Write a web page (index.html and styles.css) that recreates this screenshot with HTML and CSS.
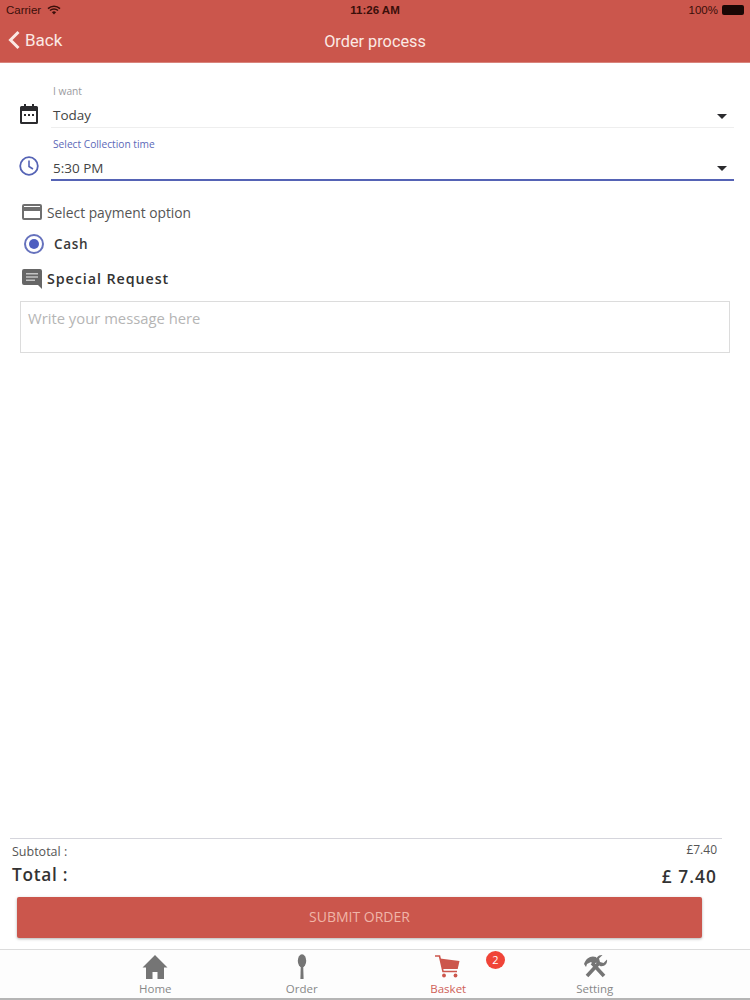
FILE: index.html
```html
<!DOCTYPE html>
<html lang="en">
  <head>
    <meta charset="UTF-8" />
    <meta name="viewport" content="width=device-width, initial-scale=1.0" />
    <title>Order process</title>
    <link rel="stylesheet" href="styles.css">
  </head>
  <body>
    <div class="page">
      <header class="top">
        <div class="status">
          <div class="status-left">
            <span>Carrier</span>
            <svg class="wifi" width="14" height="10" viewBox="0 0 14 10">
              <path d="M7 9.600 4.900 7.200a3 3 0 0 1 4.200 0z" fill="#3a0f0a"/>
              <path d="M1 3.600a8.600 8.600 0 0 1 12 0M3 5.600a5.600 5.600 0 0 1 8 0" fill="none" stroke="#3a0f0a" stroke-width="1.500"/>
            </svg>
          </div>
          <div class="status-time">11:26 AM</div>
          <div class="status-right">
            <span>100%</span>
            <div class="battery"></div>
          </div>
        </div>
        <div class="nav">
          <div class="back">
            <svg width="14" height="20" viewBox="0 0 14 20">
              <path d="M11.500 2 3.500 10l8 8" fill="none" stroke="#fbe9e4" stroke-width="3"/>
            </svg>
            <span>Back</span>
          </div>
          <div class="nav-title">Order process</div>
        </div>
      </header>

      <main class="form">
        <div class="field">
          <svg class="field-icon" width="20" height="22" viewBox="0 0 20 22">
            <path d="M2.500 3h15A1.500 1.500 0 0 1 19 4.500v15a1.500 1.500 0 0 1-1.500 1.500h-15A1.500 1.500 0 0 1 1 19.500v-15A1.500 1.500 0 0 1 2.500 3zM3 8v11h14V8z" fill="#2b2b2e"/>
            <path d="M5 1h2v4H5zM13 1h2v4h-2zM5 11h2v2H5zM9 11h2v2H9zM13 11h2v2h-2z" fill="#2b2b2e"/>
          </svg>
          <div class="field-main">
            <label class="field-label">I want</label>
            <div class="select">
              <span>Today</span>
              <span class="caret"></span>
            </div>
          </div>
        </div>

        <div class="field active">
          <svg class="field-icon" width="20" height="20" viewBox="0 0 20 20">
            <circle cx="10" cy="10" r="8.800" fill="none" stroke="#5563b5" stroke-width="1.800"/>
            <path d="M10 4.500V10.500l4 2.500" fill="none" stroke="#5563b5" stroke-width="1.600"/>
          </svg>
          <div class="field-main">
            <label class="field-label">Select Collection time</label>
            <div class="select">
              <span>5:30 PM</span>
              <span class="caret"></span>
            </div>
          </div>
        </div>

        <div class="option-title">
          <svg width="20" height="16" viewBox="0 0 20 16">
            <path d="M2 0h16a2 2 0 0 1 2 2v12a2 2 0 0 1-2 2H2a2 2 0 0 1-2-2V2a2 2 0 0 1 2-2zM2 2v1h16V2zM2 7v7h16V7z" fill="#6f6f6f"/>
          </svg>
          <span>Select payment option</span>
        </div>

        <div class="radio-row">
          <span class="radio"><span class="radio-dot"></span></span>
          <span>Cash</span>
        </div>

        <div class="request-title">
          <svg width="20" height="20" viewBox="0 0 20 20">
            <path d="M2 0h16a2 2 0 0 1 2 2v18l-4-4H2a2 2 0 0 1-2-2V2a2 2 0 0 1 2-2z" fill="#666"/>
            <path d="M4 4h12v1.600H4zM4 7.200h12v1.600H4zM4 10.400h9V12H4z" fill="#c4c4c4"/>
          </svg>
          <span>Special Request</span>
        </div>

        <div class="message">Write your message here</div>
      </main>

      <section class="summary">
        <div class="summary-row sub">
          <span>Subtotal :</span>
          <span class="sub-price">£7.40</span>
        </div>
        <div class="summary-row total">
          <span>Total :</span>
          <span class="total-price">£ 7.40</span>
        </div>
        <button class="submit">SUBMIT ORDER</button>
      </section>

      <nav class="tabs">
        <div class="tab">
          <svg width="26" height="26" viewBox="0 0 26 26">
            <path d="M13 1 0.500 13.500H4V25h6.500v-7h5v7H22V13.500h3.500z" fill="#757575"/>
          </svg>
          <span>Home</span>
        </div>
        <div class="tab">
          <svg width="26" height="26" viewBox="0 0 26 26">
            <ellipse cx="13" cy="6.800" rx="4.200" ry="6.500" fill="#757575"/>
            <path d="M11.800 11h2.400l.4 14h-3.200z" fill="#757575"/>
          </svg>
          <span>Order</span>
        </div>
        <div class="tab current">
          <svg width="26" height="26" viewBox="0 0 26 26">
            <path d="M0 2h4.500L8 17.500h14" fill="none" stroke="#cc564c" stroke-width="1.600"/>
            <path d="M5 4.500 24.500 7l-1.800 8H7.500z" fill="#cc564c"/>
            <circle cx="9" cy="21.500" r="1.900" fill="#cc564c"/>
            <circle cx="20.500" cy="21.500" r="1.900" fill="#cc564c"/>
          </svg>
          <span>Basket</span>
          <span class="badge">2</span>
        </div>
        <div class="tab">
          <svg width="26" height="26" viewBox="0 0 26 26">
            <path d="M10 9l12 13M5 22 17 9" fill="none" stroke="#757575" stroke-width="3.600"/>
            <path d="M2 10C4 4 9 1 14 3l2 3-4 5-3-3-4 2-1 3z" fill="#757575"/>
            <path d="M20.500 1 17 4.500l1 3.500 3.500 1 3.500-3.500c.8 4-2.500 7.500-7 6.500L14 8.500c-.8-4.500 2.500-8 6.500-7.500z" fill="#757575"/>
          </svg>
          <span>Setting</span>
        </div>
      </nav>
    </div>
  </body>
</html>
```

FILE: styles.css
```css
* {
  padding: 0;
  margin: 0;
  box-sizing: border-box;
}
body {
  font-family: "Open Sans", "Liberation Sans", sans-serif;
  background-color: #fff;
}
.page {
  width: 750px;
  height: 1000px;
  display: flex;
  flex-direction: column;
  overflow: hidden;
}

/* header */
.top {
  height: 63px;
  background-color: #cb564c;
  border-bottom: 1px solid #d9847c;
}
.status {
  height: 20px;
  padding: 2px 6px 0;
  display: flex;
  justify-content: space-between;
  font-family: "Liberation Sans", Arial, sans-serif;
  font-size: 11.500px;
  color: #3a0f0a;
}
.status-left,
.status-right {
  width: 200px;
  display: flex;
  align-items: center;
  height: 16px;
}
.status-left {
  gap: 6px;
}
.status-right {
  justify-content: flex-end;
  gap: 4px;
}
.status-time {
  font-weight: bold;
  line-height: 16px;
}
.battery {
  width: 22px;
  height: 10px;
  background-color: #1a0705;
  border-radius: 2px;
}
.nav {
  height: 42px;
  position: relative;
  display: flex;
  align-items: center;
  justify-content: center;
  font-family: Roboto, "Liberation Sans", sans-serif;
  font-size: 16.300px;
  color: #fbe9e4;
}
.back {
  position: absolute;
  left: 7px;
  top: 10px;
  display: flex;
  align-items: center;
  gap: 4px;
  font-size: 17px;
}

/* form */
.form {
  flex: 1;
  padding: 21px 19px 0;
}
.field {
  display: flex;
  align-items: flex-start;
  gap: 12px;
  height: 53px;
}
.field-icon {
  margin-top: 19px;
  flex-shrink: 0;
}
.field-main {
  flex: 1;
  margin-right: -3px;
}
.field-label {
  display: block;
  font-size: 10.200px;
  line-height: 14px;
  color: #9a9a9e;
  margin-left: 2px;
}
.select {
  height: 30px;
  padding: 5px 7px 0 2px;
  display: flex;
  justify-content: space-between;
  align-items: center;
  font-size: 13.500px;
  color: #444;
  border-bottom: 1px solid #eeeeee;
}
.caret {
  width: 0;
  height: 0;
  margin-top: 2px;
  border-left: 5.500px solid transparent;
  border-right: 5.500px solid transparent;
  border-top: 5.500px solid #2b2b2e;
}
.active .field-label {
  color: #5c68b8;
}
.active .select {
  border-bottom: 2px solid #5563b5;
}
.option-title {
  margin-top: 12px;
  margin-left: 3px;
  height: 20px;
  display: flex;
  align-items: center;
  gap: 5px;
  font-size: 13.800px;
  color: #555;
}
.radio-row {
  margin-top: 12px;
  margin-left: 5px;
  height: 20px;
  display: flex;
  align-items: center;
  gap: 10px;
  font-size: 13.500px;
  font-weight: 600;
  letter-spacing: 0.650px;
  color: #3a3a3a;
}
.radio {
  width: 20px;
  height: 20px;
  border: 2px solid #6672bd;
  border-radius: 50%;
  display: flex;
  align-items: center;
  justify-content: center;
}
.radio-dot {
  width: 10px;
  height: 10px;
  border-radius: 50%;
  background-color: #4f5fc0;
}
.request-title {
  margin-top: 14px;
  margin-left: 3px;
  height: 20px;
  display: flex;
  align-items: center;
  gap: 5px;
  font-size: 14.300px;
  font-weight: 600;
  letter-spacing: 0.920px;
  color: #333;
}
.request-title svg {
  margin-top: 2px;
}
.message {
  margin-top: 13px;
  margin-left: 1px;
  width: 710px;
  height: 52px;
  border: 1px solid #dcdcdc;
  padding: 6px 7px;
  font-size: 14.800px;
  color: #b5b5b5;
}

/* totals */
.summary {
  margin: 0 28px 0 10px;
  border-top: 1px solid #d5d5dc;
  padding: 4px 5px 11px 2px;
}
.summary-row {
  display: flex;
  justify-content: space-between;
}
.sub {
  height: 17px;
  font-size: 12.500px;
  color: #555;
}
.sub-price {
  font-size: 12px;
  margin-top: -2px;
}
.total {
  height: 37px;
  font-size: 17.300px;
  font-weight: 600;
  letter-spacing: 0.700px;
  color: #333;
  line-height: 30px;
}
.total-price {
  margin-top: 2px;
  letter-spacing: 1.100px;
}
.submit {
  display: block;
  width: 685px;
  height: 41px;
  margin-left: 5px;
  padding-bottom: 2px;
  background-color: #cb564c;
  border: none;
  border-radius: 2px;
  box-shadow: 0 1px 3px rgba(0, 0, 0, 0.3);
  font-family: inherit;
  font-size: 14px;
  color: #f0b5a8;
}

/* tab bar */
.tabs {
  height: 51px;
  padding: 0 82px;
  border-top: 1px solid #dcdcdc;
  border-bottom: 2px solid #b5b5b5;
  display: flex;
  background-color: #fdfdfd;
}
.tab {
  flex: 1;
  position: relative;
  display: flex;
  flex-direction: column;
  align-items: center;
  gap: 2px;
  padding-top: 4px;
  font-size: 11.500px;
  line-height: 14px;
  color: #888;
}
.current {
  color: #cf6158;
}
.badge {
  position: absolute;
  top: 1px;
  left: 111px;
  width: 19px;
  height: 18px;
  border-radius: 50%;
  background-color: #f04438;
  color: #fff;
  font-size: 11px;
  line-height: 18px;
  text-align: center;
}
```
